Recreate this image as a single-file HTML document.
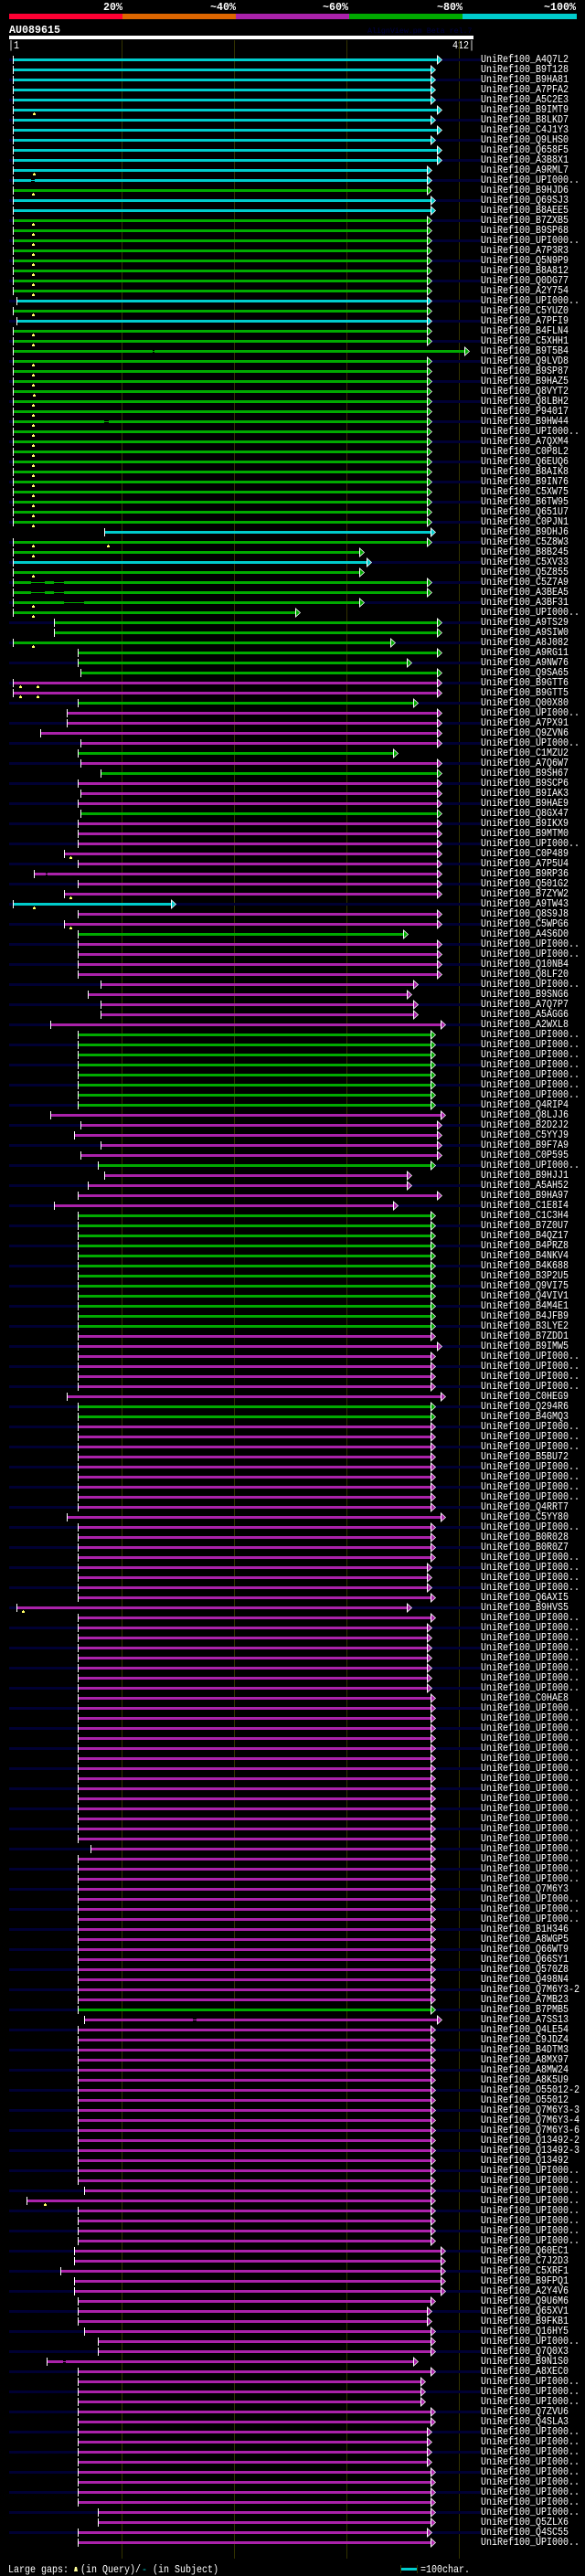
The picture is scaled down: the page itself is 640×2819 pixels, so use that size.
<!DOCTYPE html>
<html><head><meta charset="utf-8"><title>AU089615</title>
<style>
html,body{margin:0;padding:0;background:#000}
body{position:relative;width:640px;height:2819px;overflow:hidden;color:#fff;font:12px/10px "Liberation Mono","DejaVu Sans Mono",monospace}
.a{position:absolute;white-space:nowrap}
.n{transform:scaleX(.8333);transform-origin:0 0}
.t{font:bold 11.67px/14px "Liberation Mono","DejaVu Sans Mono",monospace}
.v{position:absolute;top:44px;height:2756px;width:1px;background:#333300}
u{text-decoration:none;display:inline-block;transform:scaleX(.8333);transform-origin:0 0}
#r{position:absolute;left:0;top:60px;width:640px}
#r p{--a:85;--b:471;--k:#aa22aa;--n:transparent;position:relative;margin:0;height:11px;padding-left:526px;white-space:nowrap;box-sizing:border-box;
background:linear-gradient(#fff,#fff) calc(var(--a)*1px) 1px/1px 9px no-repeat,
linear-gradient(var(--k),var(--k)) calc(var(--a)*1px) 4px/calc((var(--b) - var(--a))*1px) 3px no-repeat,
linear-gradient(var(--n),var(--n)) 10px 4px/516px 3px no-repeat}
#r p:nth-child(odd){--n:#000033}
#r p::before{content:"";position:absolute;left:calc(var(--b)*1px);top:0;width:6px;height:11px;background:#fff;clip-path:polygon(0 0,100% 50%,0 100%)}
#r p::after{content:"";position:absolute;left:calc(var(--b)*1px + 1px);top:2px;width:4px;height:7px;background:var(--k);clip-path:polygon(0 0,100% 50%,0 100%)}
#r p.c{--k:#00cccc}#r p.g{--k:#00aa00}
#r p.s{--a:14}#r p.e{--b:478}#r p.f{--b:467}#r p.x{--b:482}
b{position:absolute;left:35px;top:9px;width:3px;height:2px;background:#ffff66}
b::before{content:"";position:absolute;left:1px;top:-1px;width:1px;height:1px;background:#ffff66}
i{position:absolute;top:4px;height:3px;background:linear-gradient(#000 33%,var(--k) 33% 66%,#000 66%)}
</style></head><body>
<div class="a t" style="left:113px;top:1px">20%</div>
<div class="a t" style="left:230px;top:1px">~40%</div>
<div class="a t" style="left:353px;top:1px">~60%</div>
<div class="a t" style="left:478px;top:1px">~80%</div>
<div class="a t" style="left:595px;top:1px">~100%</div>
<div class="a" style="left:10px;top:15px;width:124px;height:6px;background:#ff0033"></div>
<div class="a" style="left:134px;top:15px;width:124px;height:6px;background:#dd6600"></div>
<div class="a" style="left:258px;top:15px;width:124px;height:6px;background:#aa22aa"></div>
<div class="a" style="left:382px;top:15px;width:124px;height:6px;background:#00aa00"></div>
<div class="a" style="left:506px;top:15px;width:125px;height:6px;background:#00cccc"></div>
<div class="a t" style="left:10px;top:26px">AU089615</div>
<div class="a" style="left:402px;top:30px;color:#000044;font:8.3px/9px 'Liberation Mono',monospace">AlignView.pm Beta rel.7</div>
<div class="a" style="left:10px;top:39px;width:508px;height:4px;background:#fff"></div>
<div class="a n" style="left:9px;top:45px">|1</div>
<div class="a n" style="left:495px;top:45px">412|</div>
<div class="v" style="left:133px"></div><div class="v" style="left:256px"></div><div class="v" style="left:379px"></div><div class="v" style="left:502px"></div>
<div id="r">
<p class="c s e"><u>UniRef100_A4Q7L2</u></p>
<p class="c s"><u>UniRef100_B9T128</u></p>
<p class="c s"><u>UniRef100_B9HA81</u></p>
<p class="c s"><u>UniRef100_A7PFA2</u></p>
<p class="c s"><u>UniRef100_A5C2E3</u></p>
<p class="c s e"><u>UniRef100_B9IMT9</u><b style="left:36px"></b></p>
<p class="c s"><u>UniRef100_B8LKD7</u></p>
<p class="c s e"><u>UniRef100_C4J1Y3</u></p>
<p class="c s"><u>UniRef100_Q9LHS0</u></p>
<p class="c s e"><u>UniRef100_Q658F5</u></p>
<p class="c s e"><u>UniRef100_A3B8X1</u></p>
<p class="c s f"><u>UniRef100_A9RML7</u><b style="left:36px"></b></p>
<p class="c s f"><u>UniRef100_UPI000..</u><i style="left:34px;width:4px"></i></p>
<p class="g s f"><u>UniRef100_B9HJD6</u><b></b></p>
<p class="c s"><u>UniRef100_Q69SJ3</u></p>
<p class="c s"><u>UniRef100_B8AEE5</u></p>
<p class="g s f"><u>UniRef100_B7ZXB5</u><b></b></p>
<p class="g s f"><u>UniRef100_B9SP68</u><b></b></p>
<p class="g s f"><u>UniRef100_UPI000..</u><b></b></p>
<p class="g s f"><u>UniRef100_A7P3R3</u><b></b></p>
<p class="g s f"><u>UniRef100_Q5N9P9</u><b></b></p>
<p class="g s f"><u>UniRef100_B8A812</u><b></b></p>
<p class="g s f"><u>UniRef100_Q0DG77</u><b></b></p>
<p class="g s f"><u>UniRef100_A2Y754</u><b></b></p>
<p class="c f" style="--a:18"><u>UniRef100_UPI000..</u></p>
<p class="g s f"><u>UniRef100_C5YUZ0</u><b></b></p>
<p class="c f" style="--a:18"><u>UniRef100_A7PFI9</u></p>
<p class="g s f"><u>UniRef100_B4FLN4</u><b></b></p>
<p class="g s f"><u>UniRef100_C5XHH1</u><b></b></p>
<p class="g s" style="--b:508"><u>UniRef100_B9T5B4</u><i style="left:167px;width:2px"></i></p>
<p class="g s f"><u>UniRef100_Q9LVD8</u><b></b></p>
<p class="g s f"><u>UniRef100_B9SP87</u><b></b></p>
<p class="g s f"><u>UniRef100_B9HAZ5</u><b></b></p>
<p class="g s f"><u>UniRef100_Q8VYT2</u><b style="left:36px"></b></p>
<p class="g s f"><u>UniRef100_Q8LBH2</u><b></b></p>
<p class="g s f"><u>UniRef100_P94017</u><b></b></p>
<p class="g s f"><u>UniRef100_B9HW44</u><b></b><i style="left:114px;width:5px"></i></p>
<p class="g s f"><u>UniRef100_UPI000..</u><b></b></p>
<p class="g s f"><u>UniRef100_A7QXM4</u><b></b></p>
<p class="g s f"><u>UniRef100_C0P8L2</u><b></b></p>
<p class="g s f"><u>UniRef100_Q6EUQ6</u><b></b></p>
<p class="g s f"><u>UniRef100_B8AIK8</u><b></b></p>
<p class="g s f"><u>UniRef100_B9IN76</u><b></b></p>
<p class="g s f"><u>UniRef100_C5XW75</u><b></b></p>
<p class="g s f"><u>UniRef100_B6TW95</u><b></b></p>
<p class="g s f"><u>UniRef100_Q651U7</u><b></b></p>
<p class="g s f"><u>UniRef100_C0PJN1</u><b></b></p>
<p class="c" style="--a:114"><u>UniRef100_B9DHJ6</u></p>
<p class="g s f"><u>UniRef100_C5Z8W3</u><b></b><b style="left:117px"></b></p>
<p class="g s" style="--b:393"><u>UniRef100_B8B245</u><b></b></p>
<p class="c s" style="--b:401"><u>UniRef100_C5XV33</u></p>
<p class="g s" style="--b:393"><u>UniRef100_Q5Z855</u><b></b></p>
<p class="g s f"><u>UniRef100_C5Z7A9</u><i style="left:34px;width:15px"></i><i style="left:59px;width:11px"></i></p>
<p class="g s f"><u>UniRef100_A3BEA5</u><i style="left:34px;width:15px"></i><i style="left:59px;width:11px"></i></p>
<p class="g s" style="--b:393"><u>UniRef100_A3BF31</u><b></b><i style="left:70px;width:22px"></i></p>
<p class="g s" style="--b:323"><u>UniRef100_UPI000..</u><b></b></p>
<p class="g e" style="--a:59"><u>UniRef100_A9TS29</u></p>
<p class="g e" style="--a:59"><u>UniRef100_A9SIW0</u></p>
<p class="g s" style="--b:427"><u>UniRef100_A8J082</u><b></b></p>
<p class="g e"><u>UniRef100_A9RG11</u></p>
<p class="g" style="--b:445"><u>UniRef100_A9NW76</u></p>
<p class="g e" style="--a:88"><u>UniRef100_Q9SA65</u></p>
<p class="s e"><u>UniRef100_B9GTT6</u><b style="left:21px"></b><b style="left:40px"></b></p>
<p class="s e"><u>UniRef100_B9GTT5</u><b style="left:21px"></b><b style="left:40px"></b></p>
<p class="g" style="--b:452"><u>UniRef100_Q00X80</u></p>
<p class="e" style="--a:73"><u>UniRef100_UPI000..</u></p>
<p class="e" style="--a:73"><u>UniRef100_A7PX91</u></p>
<p class="e" style="--a:44"><u>UniRef100_Q9ZVN6</u></p>
<p class="e" style="--a:88"><u>UniRef100_UPI000..</u></p>
<p class="g" style="--b:430"><u>UniRef100_C1MZU2</u></p>
<p class="e" style="--a:88"><u>UniRef100_A7Q6W7</u></p>
<p class="g e" style="--a:110"><u>UniRef100_B9SH67</u></p>
<p class="e"><u>UniRef100_B9SCP6</u></p>
<p class="e" style="--a:88"><u>UniRef100_B9IAK3</u></p>
<p class="e"><u>UniRef100_B9HAE9</u></p>
<p class="g e" style="--a:88"><u>UniRef100_Q8GX47</u></p>
<p class="e"><u>UniRef100_B9IKX9</u></p>
<p class="e"><u>UniRef100_B9MTM0</u></p>
<p class="e"><u>UniRef100_UPI000..</u></p>
<p class="e" style="--a:70"><u>UniRef100_C0P489</u><b style="left:76px"></b></p>
<p class="e"><u>UniRef100_A7P5U4</u></p>
<p class="e" style="--a:37"><u>UniRef100_B9RP36</u><i style="left:50px;width:2px"></i></p>
<p class="e"><u>UniRef100_Q501G2</u></p>
<p class="e" style="--a:70"><u>UniRef100_B7ZYW2</u><b style="left:76px"></b></p>
<p class="c s" style="--b:187"><u>UniRef100_A9TW43</u><b style="left:36px"></b></p>
<p class="e"><u>UniRef100_Q8S9J8</u></p>
<p class="e" style="--a:70"><u>UniRef100_C5WPG6</u><b style="left:76px"></b></p>
<p class="g" style="--b:441"><u>UniRef100_A4S6D0</u></p>
<p class="e"><u>UniRef100_UPI000..</u></p>
<p class="e"><u>UniRef100_UPI000..</u></p>
<p class="e"><u>UniRef100_Q10NB4</u></p>
<p class="e"><u>UniRef100_Q8LF20</u></p>
<p style="--a:110;--b:452"><u>UniRef100_UPI000..</u></p>
<p style="--a:96;--b:445"><u>UniRef100_B9SNG6</u></p>
<p style="--a:110;--b:452"><u>UniRef100_A7Q7P7</u></p>
<p style="--a:110;--b:452"><u>UniRef100_A5AGG6</u></p>
<p class="x" style="--a:55"><u>UniRef100_A2WXL8</u></p>
<p class="g"><u>UniRef100_UPI000..</u></p>
<p class="g"><u>UniRef100_UPI000..</u></p>
<p class="g"><u>UniRef100_UPI000..</u></p>
<p class="g"><u>UniRef100_UPI000..</u></p>
<p class="g"><u>UniRef100_UPI000..</u></p>
<p class="g"><u>UniRef100_UPI000..</u></p>
<p class="g"><u>UniRef100_UPI000..</u></p>
<p class="g"><u>UniRef100_Q4RIP4</u></p>
<p class="x" style="--a:55"><u>UniRef100_Q8LJJ6</u></p>
<p class="e" style="--a:88"><u>UniRef100_B2D2J2</u></p>
<p class="e" style="--a:81"><u>UniRef100_C5YYJ9</u></p>
<p class="e" style="--a:110"><u>UniRef100_B9F7A9</u></p>
<p class="e" style="--a:88"><u>UniRef100_C0P595</u></p>
<p class="g" style="--a:107"><u>UniRef100_UPI000..</u></p>
<p style="--a:114;--b:445"><u>UniRef100_B9HJJ1</u></p>
<p style="--a:96;--b:445"><u>UniRef100_A5AH52</u></p>
<p class="e"><u>UniRef100_B9HA97</u></p>
<p style="--a:59;--b:430"><u>UniRef100_C1E8I4</u></p>
<p class="g"><u>UniRef100_C1C3H4</u></p>
<p class="g"><u>UniRef100_B7Z0U7</u></p>
<p class="g"><u>UniRef100_B4QZ17</u></p>
<p class="g"><u>UniRef100_B4PRZ8</u></p>
<p class="g"><u>UniRef100_B4NKV4</u></p>
<p class="g"><u>UniRef100_B4K688</u></p>
<p class="g"><u>UniRef100_B3P2U5</u></p>
<p class="g"><u>UniRef100_Q9VI75</u></p>
<p class="g"><u>UniRef100_Q4VIV1</u></p>
<p class="g"><u>UniRef100_B4M4E1</u></p>
<p class="g"><u>UniRef100_B4JFB9</u></p>
<p class="g"><u>UniRef100_B3LYE2</u></p>
<p><u>UniRef100_B7ZDD1</u></p>
<p class="e"><u>UniRef100_B9IMW5</u></p>
<p><u>UniRef100_UPI000..</u></p>
<p><u>UniRef100_UPI000..</u></p>
<p><u>UniRef100_UPI000..</u></p>
<p><u>UniRef100_UPI000..</u></p>
<p class="x" style="--a:73"><u>UniRef100_C0HEG9</u></p>
<p class="g"><u>UniRef100_Q294R6</u></p>
<p class="g"><u>UniRef100_B4GMQ3</u></p>
<p><u>UniRef100_UPI000..</u></p>
<p><u>UniRef100_UPI000..</u></p>
<p><u>UniRef100_UPI000..</u></p>
<p><u>UniRef100_B5BU72</u></p>
<p><u>UniRef100_UPI000..</u></p>
<p><u>UniRef100_UPI000..</u></p>
<p><u>UniRef100_UPI000..</u></p>
<p><u>UniRef100_UPI000..</u></p>
<p><u>UniRef100_Q4RRT7</u></p>
<p class="x" style="--a:73"><u>UniRef100_C5YY80</u></p>
<p><u>UniRef100_UPI000..</u></p>
<p><u>UniRef100_B0R028</u></p>
<p><u>UniRef100_B0R0Z7</u></p>
<p><u>UniRef100_UPI000..</u></p>
<p class="f"><u>UniRef100_UPI000..</u></p>
<p class="f"><u>UniRef100_UPI000..</u></p>
<p class="f"><u>UniRef100_UPI000..</u></p>
<p><u>UniRef100_Q6AXI5</u></p>
<p style="--a:18;--b:445"><u>UniRef100_B9HVS5</u><b style="left:24px"></b></p>
<p><u>UniRef100_UPI000..</u></p>
<p class="f"><u>UniRef100_UPI000..</u></p>
<p class="f"><u>UniRef100_UPI000..</u></p>
<p class="f"><u>UniRef100_UPI000..</u></p>
<p class="f"><u>UniRef100_UPI000..</u></p>
<p class="f"><u>UniRef100_UPI000..</u></p>
<p class="f"><u>UniRef100_UPI000..</u></p>
<p class="f"><u>UniRef100_UPI000..</u></p>
<p><u>UniRef100_C0HAE8</u></p>
<p><u>UniRef100_UPI000..</u></p>
<p><u>UniRef100_UPI000..</u></p>
<p><u>UniRef100_UPI000..</u></p>
<p><u>UniRef100_UPI000..</u></p>
<p><u>UniRef100_UPI000..</u></p>
<p><u>UniRef100_UPI000..</u></p>
<p><u>UniRef100_UPI000..</u></p>
<p><u>UniRef100_UPI000..</u></p>
<p><u>UniRef100_UPI000..</u></p>
<p><u>UniRef100_UPI000..</u></p>
<p><u>UniRef100_UPI000..</u></p>
<p><u>UniRef100_UPI000..</u></p>
<p><u>UniRef100_UPI000..</u></p>
<p><u>UniRef100_UPI000..</u></p>
<p style="--a:99"><u>UniRef100_UPI000..</u></p>
<p><u>UniRef100_UPI000..</u></p>
<p><u>UniRef100_UPI000..</u></p>
<p><u>UniRef100_UPI000..</u></p>
<p><u>UniRef100_Q7M6Y3</u></p>
<p><u>UniRef100_UPI000..</u></p>
<p><u>UniRef100_UPI000..</u></p>
<p><u>UniRef100_UPI000..</u></p>
<p><u>UniRef100_B1H346</u></p>
<p><u>UniRef100_A8WGP5</u></p>
<p><u>UniRef100_Q66WT9</u></p>
<p><u>UniRef100_Q66SY1</u></p>
<p><u>UniRef100_Q570Z8</u></p>
<p><u>UniRef100_Q498N4</u></p>
<p><u>UniRef100_Q7M6Y3-2</u></p>
<p><u>UniRef100_A7MB23</u></p>
<p class="g"><u>UniRef100_B7PMB5</u></p>
<p class="e" style="--a:92"><u>UniRef100_A7SS13</u><i style="left:211px;width:4px"></i></p>
<p><u>UniRef100_Q4LE54</u></p>
<p><u>UniRef100_C9JDZ4</u></p>
<p><u>UniRef100_B4DTM3</u></p>
<p><u>UniRef100_A8MX97</u></p>
<p><u>UniRef100_A8MW24</u></p>
<p><u>UniRef100_A8K5U9</u></p>
<p><u>UniRef100_O55012-2</u></p>
<p><u>UniRef100_O55012</u></p>
<p><u>UniRef100_Q7M6Y3-3</u></p>
<p><u>UniRef100_Q7M6Y3-4</u></p>
<p><u>UniRef100_Q7M6Y3-6</u></p>
<p><u>UniRef100_Q13492-2</u></p>
<p><u>UniRef100_Q13492-3</u></p>
<p><u>UniRef100_Q13492</u></p>
<p><u>UniRef100_UPI000..</u></p>
<p><u>UniRef100_UPI000..</u></p>
<p style="--a:92"><u>UniRef100_UPI000..</u></p>
<p style="--a:29"><u>UniRef100_UPI000..</u><b style="left:48px"></b></p>
<p><u>UniRef100_UPI000..</u></p>
<p><u>UniRef100_UPI000..</u></p>
<p><u>UniRef100_UPI000..</u></p>
<p><u>UniRef100_UPI000..</u></p>
<p class="x" style="--a:81"><u>UniRef100_Q60EC1</u></p>
<p class="x" style="--a:81"><u>UniRef100_C7J2D3</u></p>
<p class="x" style="--a:66"><u>UniRef100_C5XRF1</u></p>
<p class="x" style="--a:81"><u>UniRef100_B9FPQ1</u></p>
<p class="x" style="--a:81"><u>UniRef100_A2Y4V6</u></p>
<p><u>UniRef100_Q9U6M6</u></p>
<p class="f"><u>UniRef100_Q65XV1</u></p>
<p class="f"><u>UniRef100_B9FKB1</u></p>
<p style="--a:92"><u>UniRef100_Q16HY5</u></p>
<p style="--a:107"><u>UniRef100_UPI000..</u></p>
<p style="--a:107"><u>UniRef100_Q7Q0X3</u></p>
<p style="--a:51;--b:452"><u>UniRef100_B9N1S0</u><i style="left:69px;width:3px"></i></p>
<p><u>UniRef100_A8XEC0</u></p>
<p style="--b:460"><u>UniRef100_UPI000..</u></p>
<p style="--b:460"><u>UniRef100_UPI000..</u></p>
<p style="--b:460"><u>UniRef100_UPI000..</u></p>
<p><u>UniRef100_Q7ZVU6</u></p>
<p><u>UniRef100_Q4SLA3</u></p>
<p class="f"><u>UniRef100_UPI000..</u></p>
<p class="f"><u>UniRef100_UPI000..</u></p>
<p class="f"><u>UniRef100_UPI000..</u></p>
<p class="f"><u>UniRef100_UPI000..</u></p>
<p><u>UniRef100_UPI000..</u></p>
<p><u>UniRef100_UPI000..</u></p>
<p><u>UniRef100_UPI000..</u></p>
<p><u>UniRef100_UPI000..</u></p>
<p style="--a:107"><u>UniRef100_UPI000..</u></p>
<p style="--a:107"><u>UniRef100_Q5ZLX6</u></p>
<p class="f"><u>UniRef100_Q4SC55</u></p>
<p><u>UniRef100_UPI000..</u></p>
</div>
<div class="a n" style="left:9px;top:2807px">Large gaps:</div>
<div class="a" style="left:81px;top:2809px;width:4px;height:5px;background:#ffff99;clip-path:polygon(25% 0,75% 0,100% 100%,0 100%)"></div>
<div class="a n" style="left:88px;top:2807px">(in Query)/</div>
<div class="a n" style="left:155px;top:2807px;color:#00cccc">-</div>
<div class="a n" style="left:167px;top:2807px">(in Subject)</div>
<div class="a" style="left:438px;top:2807px;width:1px;height:9px;background:#333300"></div>
<div class="a" style="left:456px;top:2807px;width:1px;height:9px;background:#333300"></div>
<div class="a" style="left:439px;top:2810px;width:17px;height:3px;background:#00cccc"></div>
<div class="a n" style="left:460px;top:2807px">=100char.</div>
</body></html>
